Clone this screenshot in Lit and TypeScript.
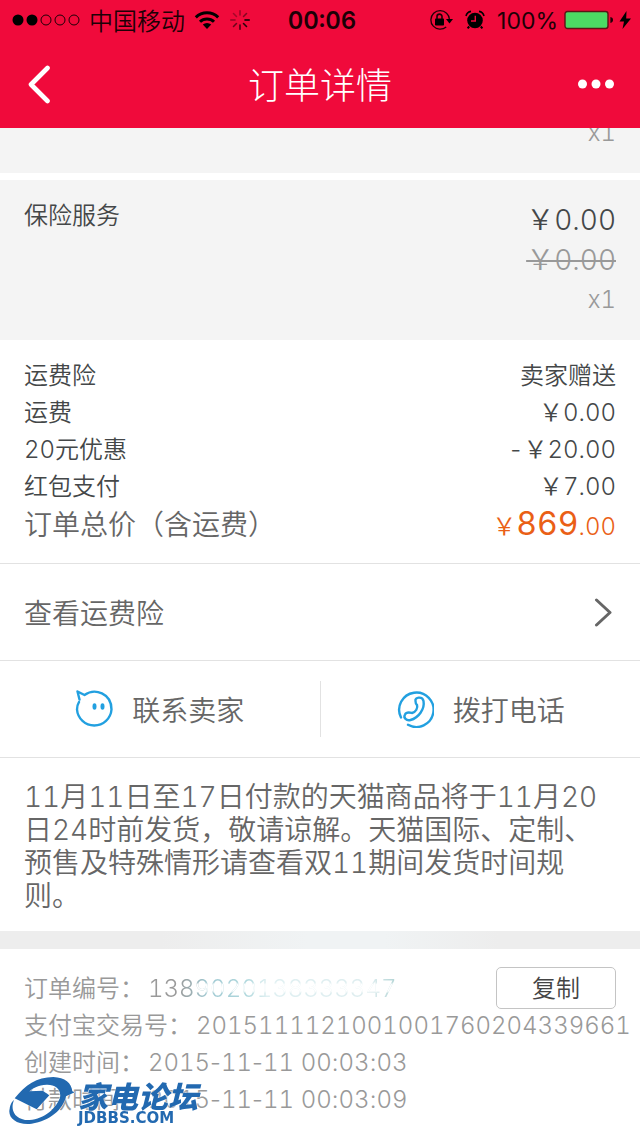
import { LitElement, html, css, svg } from "lit";
import { customElement } from "lit/decorators.js";

interface Row {
  label: string;
  value: string;
}

const costs: Row[] = [
  { label: "运费险", value: "卖家赠送" },
  { label: "运费", value: "￥0.00" },
  { label: "20元优惠", value: "-￥20.00" },
  { label: "红包支付", value: "￥7.00" },
];

const details: Row[] = [
  { label: "支付宝交易号：", value: "2015111121001001760204339661" },
  { label: "创建时间：", value: "2015-11-11 00:03:03" },
  { label: "付款时间：", value: "2015-11-11 00:03:09" },
];

const spokes = [1, 0.85, 0.7, 0.55, 0.4, 0.3, 0.35, 0.45];

// Digits stay tabular while the separators between them keep their own width.
const stamp = (value: string) =>
  value
    .split(/([-: ]+)/)
    .map((part, i) => (i % 2 ? html`<span class="sep">${part}</span>` : part));

@customElement("status-bar")
class StatusBar extends LitElement {
  static styles = css`
    :host {
      display: grid;
      grid-template-columns: 1fr auto 1fr;
      align-items: center;
      height: 40px;
      padding: 0 8px 0 12px;
      color: #1d0006;
      font-size: 23px;
      font-weight: 400;
      line-height: 40px;
    }
    svg {
      display: block;
      flex: none;
    }
    .group {
      display: flex;
      align-items: center;
      gap: 9px;
    }
    .carrier {
      padding-top: 4px;
      font-size: 24px;
      font-weight: 350;
      line-height: 36px;
    }
    .end {
      justify-content: flex-end;
      gap: 12px;
    }
    .power {
      display: flex;
      align-items: center;
      gap: 6px;
    }
    .time {
      padding-top: 2px;
      font-weight: 600;
      font-size: 24px;
      line-height: 38px;
    }
    .level {
      padding-top: 2px;
      font-variant-numeric: normal;
      line-height: 38px;
    }
  `;

  render() {
    return html`
      <div class="group">
        <svg width="68" height="14" viewBox="0 0 68 14" fill="none" stroke="currentColor">
          <circle cx="6" cy="7" r="5.5" fill="#000" stroke="none" />
          <circle cx="20" cy="7" r="5.5" fill="#000" stroke="none" />
          <circle cx="34" cy="7" r="5" />
          <circle cx="48" cy="7" r="5" />
          <circle cx="62" cy="7" r="5" />
        </svg>
        <span class="carrier">中国移动</span>
        <svg width="26" height="20" viewBox="0 0 26 20" fill="none" stroke="#000" stroke-width="3">
          <path d="M1.8 7.4a16 16 0 0 1 22.4 0" />
          <path d="M6 11.8a10 10 0 0 1 14 0" />
          <path d="M8.8 14.6a6 6 0 0 1 8.4 0L13 19Z" fill="#000" stroke="none" />
        </svg>
        <svg width="22" height="22" viewBox="-11 -11 22 22" stroke="#000" stroke-width="1.6" stroke-linecap="round">
          ${spokes.map(
            (o, i) => svg`<path d="M0 -5V-9.2" opacity=${o} transform="rotate(${i * 45 + 90})" />`
          )}
        </svg>
      </div>
      <span class="time">00:06</span>
      <div class="group end">
        <svg width="24" height="22" viewBox="0 0 24 22" fill="none" stroke="currentColor" stroke-width="1.3">
          <path d="M17.6 4.2A9.3 9.3 0 1 0 17.2 18M17.6 4.2a9 9 0 0 1 2.8 6" />
          <path d="M17 10h7l-3.5 4.5Z" fill="#000" stroke="none" />
          <rect x="6" y="9.5" width="9" height="7" rx="0.8" fill="#000" stroke="none" />
          <path d="M8 10V7.6a2.5 2.5 0 0 1 5 0V10" stroke-width="1.6" />
        </svg>
        <svg width="20" height="20" viewBox="0 0 20 20" fill="none">
          <circle cx="10" cy="10.5" r="7.8" fill="#000" />
          <path d="M4.2 16.5 2.6 18.4M15.8 16.5l1.6 1.9" stroke="#000" stroke-width="2" />
          <path d="M1 6a6 6 0 0 1 5-4.6M19 6a6 6 0 0 0-5-4.6" stroke="#000" stroke-width="1.6" />
          <path d="M10.3 5.8V11H6" stroke="#f00a3b" stroke-width="1.4" />
        </svg>
        <div class="power">
          <span class="level">100%</span>
          <svg width="68" height="20" viewBox="0 0 68 20">
            <rect x="1" y="1.5" width="43" height="17" rx="2.5" fill="#4cd964" stroke="#5a1515" stroke-width="1.4" />
            <path d="M46.4 7c2 .4 2.6 1.6 2.6 3s-.6 2.6-2.6 3Z" fill="#1d0006" />
            <path d="M62.5 1 55.5 11.5H60L58.5 19 67 8.5h-4.8Z" fill="#000" />
          </svg>
        </div>
      </div>
    `;
  }
}

@customElement("forum-mark")
class ForumMark extends LitElement {
  static styles = css`
    :host {
      display: flex;
      align-items: center;
      color: #2269b0;
    }
    .words {
      display: flex;
      flex-direction: column;
      padding-left: 2px;
      filter: drop-shadow(0 0 1px #fff);
    }
    .name {
      font: italic 900 30px/32px "Noto Sans CJK SC", sans-serif;
    }
    .site {
      font: bold 15px/14px "DejaVu Sans", sans-serif;
    }
  `;

  render() {
    return html`
      <svg width="67" height="52" viewBox="27 30 201 156">
        <path
          d="M44 97C75 58 110 33 160 33c35 1 55 19 57 43l7 3-26 12c-8 39-48 74-103 82-45 5-73-18-66-45 2-13 8-23 13-25-10 22-4 52 33 59 45 3 90-27 105-67 5-25-15-40-40-39-25 1-45 12-52 20l40-2 20 14-38 42Z"
          fill="#2269b0"
          stroke="#fff"
          stroke-width="2"
          paint-order="stroke"
        />
      </svg>
      <div class="words">
        <span class="name">家电论坛</span>
        <span class="site">JDBBS.COM</span>
      </div>
    `;
  }
}

@customElement("app-root")
class AppRoot extends LitElement {
  static styles = css`
    :host {
      display: block;
      position: relative;
      min-height: 100vh;
      overflow: hidden;
      background: #fff;
      color: #444748;
      font-family: Inter, "Noto Sans CJK SC", sans-serif;
      font-size: 24px;
      font-weight: 350;
      font-variant-numeric: tabular-nums;
    }
    svg {
      display: block;
      flex: none;
    }
    button {
      border: 0;
      padding: 0;
      background: none;
      font: inherit;
      color: inherit;
    }
    .top {
      position: relative;
      z-index: 1;
      background: #f00a3b;
    }
    .nav {
      display: grid;
      grid-template-columns: 1fr auto 1fr;
      align-items: center;
      height: 88px;
      padding: 0 24px;
      color: #fff;
    }
    .title {
      margin: 0;
      padding-top: 4px;
      font-size: 36px;
      font-weight: 300;
      line-height: 48px;
    }
    .more {
      justify-self: end;
    }
    .goods {
      margin-top: -35px;
      display: flex;
      flex-direction: column;
      gap: 7px;
    }
    .item {
      display: flex;
      justify-content: space-between;
      padding: 20px 24px;
      background: #f4f4f4;
    }
    .item-name {
      line-height: 32px;
    }
    .prices {
      display: flex;
      flex-direction: column;
      align-items: flex-end;
      font-size: 28px;
      line-height: 40px;
    }
    .old {
      color: #999;
    }
    .count {
      color: #999;
      font-size: 24px;
    }
    .costs {
      padding: 17px 24px;
      border-bottom: 1px solid #e2e2e2;
      line-height: 37px;
    }
    .row {
      display: flex;
      justify-content: space-between;
    }
    .total {
      align-items: baseline;
      color: #666;
      font-size: 28px;
      line-height: 38px;
    }
    .sum {
      color: #ea5f16;
      font-size: 24px;
    }
    .big {
      font-size: 32px;
      font-weight: 400;
    }
    .insurance {
      display: flex;
      justify-content: space-between;
      align-items: center;
      width: 100%;
      height: 97px;
      padding: 0 28px 0 24px;
      border-bottom: 1px solid #e2e2e2;
      box-sizing: border-box;
      color: #666;
      font-size: 28px;
    }
    .contact {
      display: flex;
      padding: 20px 0;
      border-bottom: 1px solid #e2e2e2;
    }
    .action {
      flex: 1;
      display: flex;
      justify-content: center;
      align-items: center;
      gap: 19px;
      height: 56px;
      color: #666;
      font-size: 28px;
    }
    .action + .action {
      border-left: 1px solid #e2e2e2;
    }
    .notice {
      margin: 0;
      padding: 23px 24px 18px;
      color: #666;
      font-size: 28px;
      line-height: 33px;
    }
    .band {
      height: 18px;
      background: linear-gradient(90deg, #ededed 25%, #f0f3f4 48%, #f0f3f4 60%, #ededed 78%);
    }
    .details {
      display: flex;
      flex-direction: column;
      padding: 18px 24px;
      line-height: 37px;
      color: #999;
    }
    .detail {
      display: flex;
      gap: 4px;
      white-space: nowrap;
    }
    .sep {
      font-variant-numeric: normal;
      white-space: pre;
    }
    .number {
      height: 40px;
      line-height: 44px;
    }
    .faded {
      color: transparent;
      background: linear-gradient(180deg, transparent 38%, #fff 44%, #fff 60%, transparent 66%) 46px 0 no-repeat,
        linear-gradient(90deg, #999 12%, #a0c9d2 24%, #b0d8dd 40%, #e0f0f2 48%, #deedef 90%, #b2d4d5 100%);
      background-clip: text;
      -webkit-background-clip: text;
    }
    .copy {
      width: 120px;
      height: 42px;
      margin-left: auto;
      box-sizing: border-box;
      border: 1px solid #c4c4c4;
      border-radius: 5px;
      color: #444;
      line-height: 42px;
    }
    .mark {
      position: absolute;
      left: 9px;
      bottom: 8px;
    }
  `;

  render() {
    return html`
      <header class="top" lang="zh-CN">
        <status-bar></status-bar>
        <nav class="nav">
          <button class="back" aria-label="返回">
            <svg width="28" height="40" viewBox="0 0 28 40" fill="none" stroke="#fff" stroke-width="4.6" stroke-linecap="round" stroke-linejoin="round">
              <path d="M23.5 4 7 20.5 23.5 37" />
            </svg>
          </button>
          <h1 class="title">订单详情</h1>
          <button class="more" aria-label="更多">
            <svg width="38" height="10" viewBox="0 0 38 10" fill="#fff">
              <circle cx="4.5" cy="5" r="4.5" />
              <circle cx="18" cy="5" r="4.5" />
              <circle cx="31.5" cy="5" r="4.5" />
            </svg>
          </button>
        </nav>
      </header>
      <main lang="zh-CN">
        <section class="goods">
          <div class="item">
            <span class="item-name"></span>
            <div class="prices"><span class="count">x1</span></div>
          </div>
          <div class="item">
            <span class="item-name">保险服务</span>
            <div class="prices">
              <span>￥0.00</span>
              <s class="old">￥0.00</s>
              <span class="count">x1</span>
            </div>
          </div>
        </section>
        <section class="costs">
          ${costs.map(
            (r) => html`<div class="row"><span>${r.label}</span><span>${r.value}</span></div>`
          )}
          <div class="row total">
            <span>订单总价（含运费）</span>
            <span class="sum">￥<span class="big">869</span>.00</span>
          </div>
        </section>
        <button class="insurance">
          <span>查看运费险</span>
          <svg width="18" height="30" viewBox="0 0 18 30" fill="none" stroke="#666" stroke-width="3" stroke-linecap="round" stroke-linejoin="round">
            <path d="M2.5 3 16 15.5 2.5 28" />
          </svg>
        </button>
        <section class="contact">
          <button class="action">
            <svg width="38" height="38" viewBox="0 0 38 38" fill="none" stroke="#22a0e0" stroke-width="2.4" stroke-linecap="round" stroke-linejoin="round">
              <path d="M4.5 9.5 2.5 1.5 9.500 5C20-2.500 36.500 3.500 36.500 19.500A17.300 17.300 0 0 1 2 19.500c0-3 .8-5.500 2-7.500" />
              <ellipse cx="19.5" cy="16.5" rx="2" ry="3.3" fill="#22a0e0" stroke="none" />
              <ellipse cx="27.5" cy="16.5" rx="2" ry="3.3" fill="#22a0e0" stroke="none" />
            </svg>
            联系卖家
          </button>
          <button class="action">
            <svg width="38" height="38" viewBox="0 0 38 38" fill="none" stroke="#22a0e0" stroke-width="2.4" stroke-linecap="round" stroke-linejoin="round">
              <path d="M5 27.500A17.200 17.200 0 1 1 12 34.800" />
              <path d="M19.500 11c-1-4 7-5 8 0 1.500 8-5 17-13 19-4 1-7.500-2-5.500-5.500 1.500-3 5-2 7-1.500 4-1 6-5 5-8-1-.8-1.500-2-1.500-4Z" />
            </svg>
            拨打电话
          </button>
        </section>
        <p class="notice">
          11月11日至17日付款的天猫商品将于11月20日24时前发货，敬请谅解。天猫国际、定制、预售及特殊情形请查看双11期间发货时间规则。
        </p>
        <div class="band"></div>
        <section class="details">
          <div class="detail number">
            <span>订单编号：</span>
            <span class="faded">1389020138333347</span>
            <button class="copy">复制</button>
          </div>
          ${details.map(
            (d) => html`<div class="detail"><span>${d.label}</span><span>${stamp(d.value)}</span></div>`
          )}
        </section>
      </main>
      <forum-mark class="mark" lang="zh-CN"></forum-mark>
    `;
  }
}
